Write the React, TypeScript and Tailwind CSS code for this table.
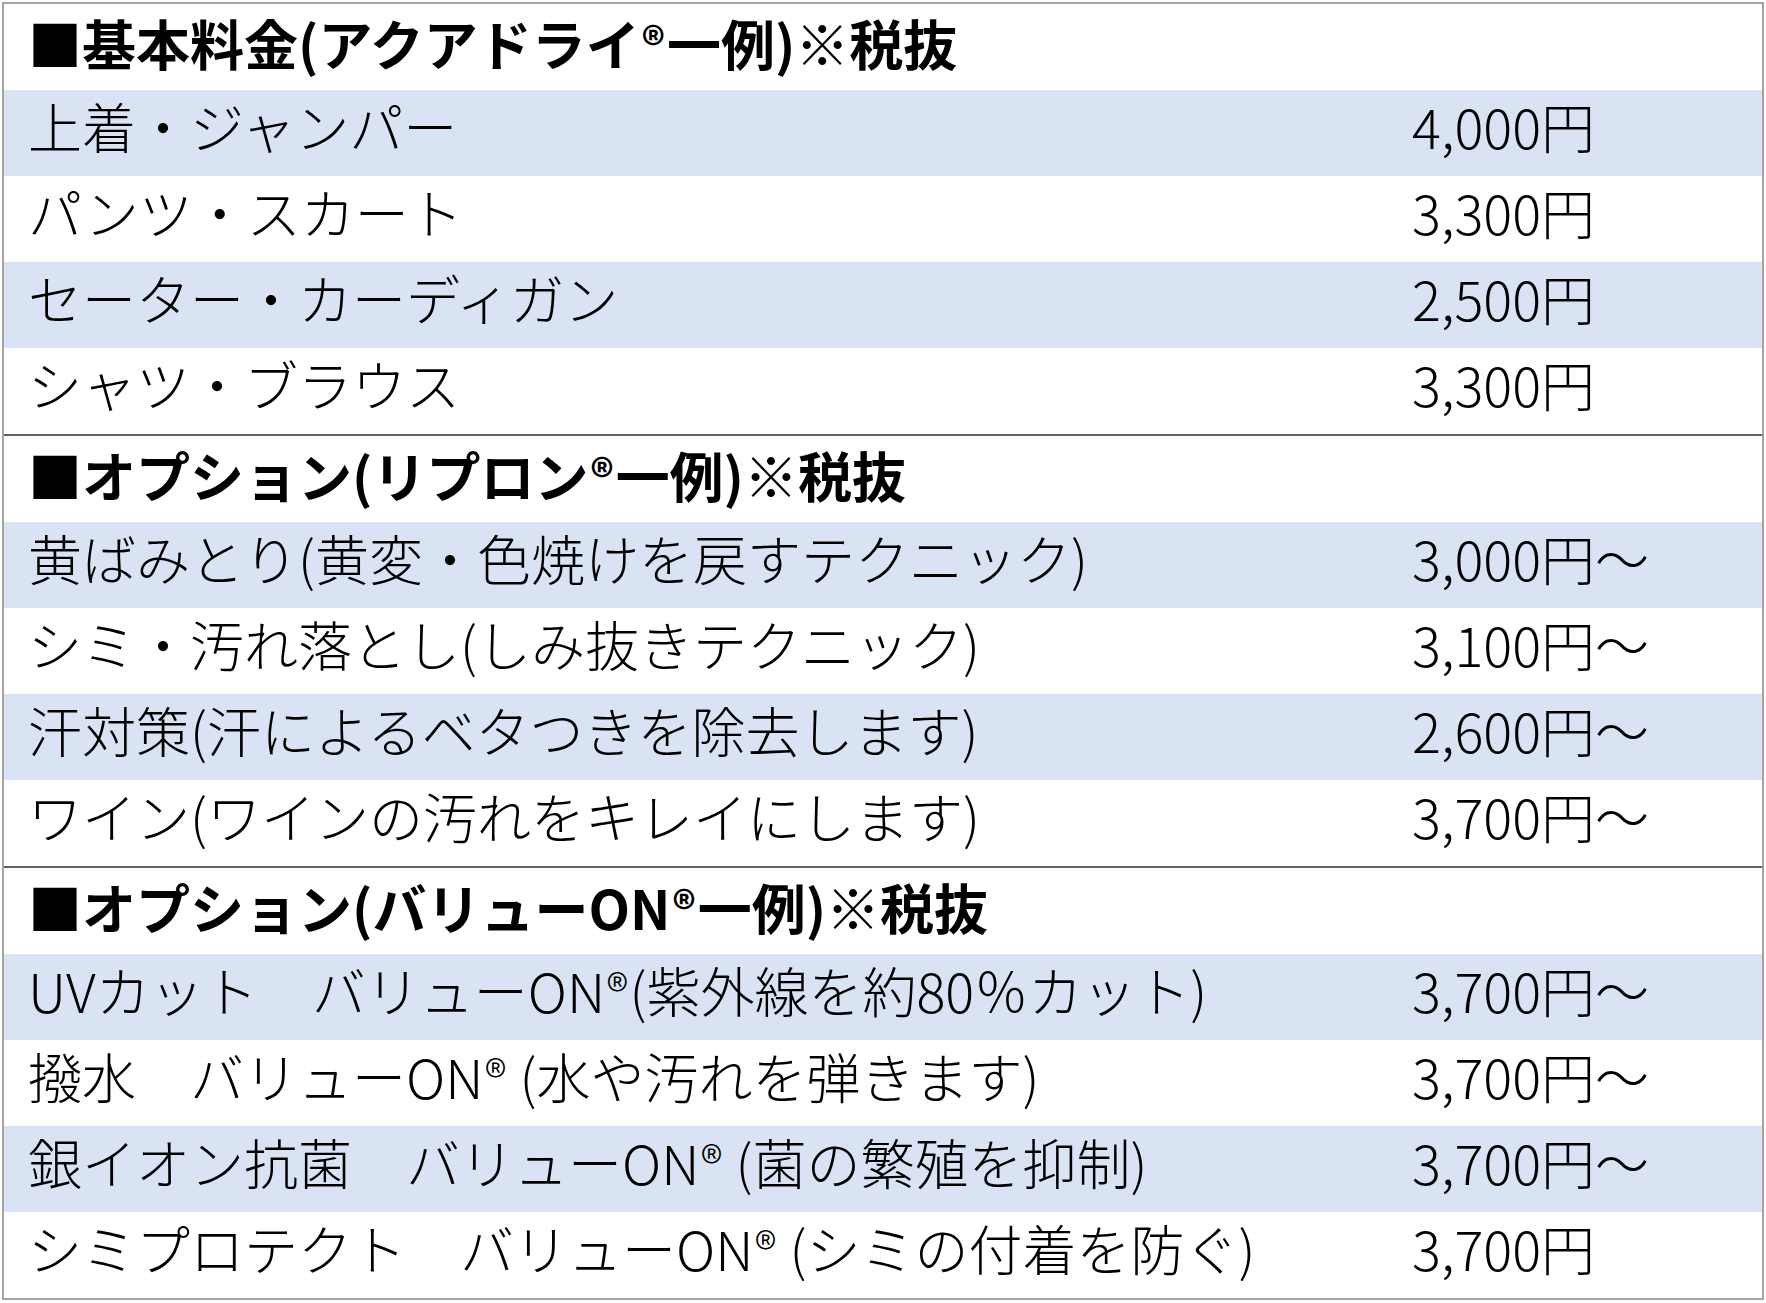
type Item = {
  name: React.ReactNode;
  price: string;
};

type Section = {
  title: React.ReactNode;
  items: Item[];
};

const R = () => <span className="text-[0.85em] align-[0.12em] px-[0.04em]">®</span>;

const sections: Section[] = [
  {
    title: (
      <>
        ■基本料金(アクアドライ<R />一例)※税抜
      </>
    ),
    items: [
      { name: "上着・ジャンパー", price: "4,000円" },
      { name: "パンツ・スカート", price: "3,300円" },
      { name: "セーター・カーディガン", price: "2,500円" },
      { name: "シャツ・ブラウス", price: "3,300円" },
    ],
  },
  {
    title: (
      <>
        ■オプション(リプロン<R />一例)※税抜
      </>
    ),
    items: [
      { name: "黄ばみとり(黄変・色焼けを戻すテクニック)", price: "3,000円～" },
      { name: "シミ・汚れ落とし(しみ抜きテクニック)", price: "3,100円～" },
      { name: "汗対策(汗によるベタつきを除去します)", price: "2,600円～" },
      { name: "ワイン(ワインの汚れをキレイにします)", price: "3,700円～" },
    ],
  },
  {
    title: (
      <>
        ■オプション(バリューON<R />一例)※税抜
      </>
    ),
    items: [
      {
        name: (
          <>
            UVカット　バリューON<R />(紫外線を約80％カット)
          </>
        ),
        price: "3,700円～",
      },
      {
        name: (
          <>
            撥水　バリューON<R /> (水や汚れを弾きます)
          </>
        ),
        price: "3,700円～",
      },
      {
        name: (
          <>
            銀イオン抗菌　バリューON<R /> (菌の繁殖を抑制)
          </>
        ),
        price: "3,700円～",
      },
      {
        name: (
          <>
            シミプロテクト　バリューON<R /> (シミの付着を防ぐ)
          </>
        ),
        price: "3,700円",
      },
    ],
  },
];

export default function App() {
  return (
    <div
      className="w-[1766px] h-[1303px] bg-white pt-[2px] pl-[2px] text-black"
      style={{ fontFamily: '"Noto Sans CJK JP", "Noto Sans", sans-serif' }}
    >
      <div className="w-[1762px] border-2 border-[#a3a3a3]">
        {sections.map((s, si) => (
          <div
            key={si}
            className={si > 0 ? "border-t-2 border-[#636363]" : ""}
          >
            <div className="h-[86px] flex items-center pl-[24px] pb-[8px] text-[54px] font-bold leading-none whitespace-nowrap">
              {s.title}
            </div>
            {s.items.map((it, i) => (
              <div
                key={i}
                className={
                  "h-[86px] flex items-center pb-[14px] text-[54px] font-light leading-none whitespace-nowrap " +
                  (i % 2 === 0 ? "bg-[#dae3f3]" : "bg-white")
                }
              >
                <div className="flex-1 pl-[24px]">{it.name}</div>
                <div className="w-[350px]">{it.price}</div>
              </div>
            ))}
          </div>
        ))}
      </div>
    </div>
  );
}
